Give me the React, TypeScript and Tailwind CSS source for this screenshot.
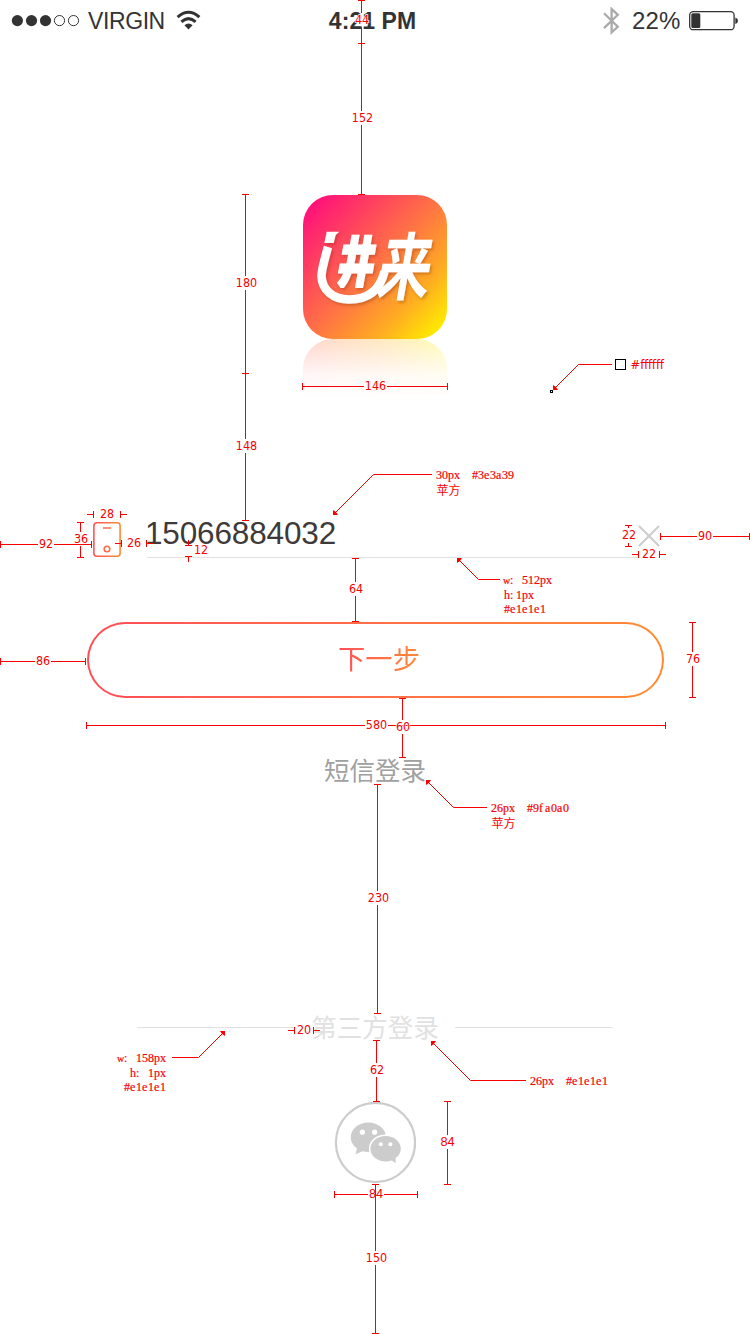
import React from "react";

const RED = "#f90000";

type Dim = {
  axis: "v" | "h";
  at: number;
  from: number;
  to: number;
  label: string;
  cx: number;
  cy: number;
  outside?: boolean;
  arial?: boolean;
};

const dims: Dim[] = [
  { axis: "v", at: 361, from: 0, to: 43, label: "44", cx: 362, cy: 20 },
  { axis: "v", at: 361, from: 43, to: 194, label: "152", cx: 362.5, cy: 118 },
  { axis: "v", at: 245, from: 194, to: 373, label: "180", cx: 246.5, cy: 283 },
  { axis: "v", at: 245, from: 373, to: 520, label: "148", cx: 246.5, cy: 446 },
  { axis: "v", at: 80, from: 522, to: 557, label: "36", cx: 81, cy: 539 },
  { axis: "v", at: 188, from: 545, to: 556, label: "12", cx: 201, cy: 550, outside: true },
  { axis: "v", at: 355, from: 558, to: 621, label: "64", cx: 356, cy: 589 },
  { axis: "v", at: 692, from: 622, to: 697, label: "76", cx: 693, cy: 659 },
  { axis: "v", at: 377, from: 784, to: 1013, label: "230", cx: 378.5, cy: 898 },
  { axis: "v", at: 376, from: 1040, to: 1101, label: "62", cx: 377, cy: 1070 },
  { axis: "v", at: 447, from: 1101, to: 1184, label: "84", cx: 447.5, cy: 1142, arial: true },
  { axis: "h", at: 386, from: 302, to: 447, label: "146", cx: 375.5, cy: 386 },
  { axis: "h", at: 514, from: 93, to: 120, label: "28", cx: 107, cy: 514, outside: true },
  { axis: "h", at: 544, from: 0, to: 91, label: "92", cx: 46, cy: 544 },
  { axis: "h", at: 543, from: 121, to: 146, label: "26", cx: 134, cy: 543, outside: true },
  { axis: "h", at: 554, from: 638, to: 659, label: "22", cx: 649, cy: 554, outside: true },
  { axis: "h", at: 536, from: 660, to: 749, label: "90", cx: 705, cy: 536 },
  { axis: "h", at: 661, from: 0, to: 85, label: "86", cx: 43, cy: 661 },
  { axis: "h", at: 725, from: 86, to: 665, label: "580", cx: 376.5, cy: 725 },
  { axis: "v", at: 402, from: 698, to: 757, label: "60", cx: 403, cy: 727 },
  { axis: "h", at: 1030, from: 294, to: 313, label: "20", cx: 304, cy: 1030, outside: true },
  { axis: "h", at: 1194, from: 334, to: 417, label: "84", cx: 376, cy: 1194, arial: true },
  { axis: "v", at: 375, from: 1184, to: 1333, label: "150", cx: 376.5, cy: 1258 },
];

function segments(d: Dim): [number, number][] {
  if (d.outside) {
    const reach = d.axis === "v" ? 5 : 6;
    return [
      [d.from - reach, d.from],
      [d.to, d.to + reach + 1],
    ];
  }
  const half = d.axis === "v" ? 7 : d.label.length * 3.5 + 1;
  const c = d.axis === "v" ? d.cy : d.cx;
  return [
    [d.from, c - half],
    [c + half, d.to + 1],
  ];
}

function Dimension({ d }: { d: Dim }) {
  const p = d.at + 0.5;
  const line = (a: number, b: number, k: number) =>
    d.axis === "v" ? (
      <line key={k} x1={p} x2={p} y1={a} y2={b} />
    ) : (
      <line key={k} x1={a} x2={b} y1={p} y2={p} />
    );
  const cap = (c: number, k: string) =>
    d.axis === "v" ? (
      <line key={k} x1={p - 3.5} x2={p + 3.5} y1={c + 0.5} y2={c + 0.5} />
    ) : (
      <line key={k} y1={p - 3.5} y2={p + 3.5} x1={c + 0.5} x2={c + 0.5} />
    );
  return (
    <g>
      <g stroke={RED} strokeWidth="1" shapeRendering="crispEdges">
        {segments(d).map(([a, b], i) => line(a, b, i))}
        {cap(d.from, "a")}
        {cap(d.to, "b")}
      </g>
      <Label x={d.cx} y={d.cy} arial={d.arial}>
        {d.label}
      </Label>
    </g>
  );
}

function Label({ x, y, arial, children }: { x: number; y: number; arial?: boolean; children: string }) {
  return (
    <text
      x={x}
      y={y + 4}
      textAnchor="middle"
      fill={RED}
      textLength={children.length * 7.1}
      lengthAdjust="spacingAndGlyphs"
      className={
        arial
          ? "font-['Liberation_Sans',sans-serif] text-[12.5px]"
          : "font-['DejaVu_Sans',sans-serif] text-[12px]"
      }
      stroke="#fff"
      strokeWidth="1.5"
      paintOrder="stroke"
    >
      {children}
    </text>
  );
}

/* Half-width note text set on a 6px grid, 12px for Han characters. */
function Note({ x, y, children }: { x: number; y: number; children: string }) {
  const han = children.charCodeAt(0) > 255;
  const wide = children.startsWith("w");
  const xs = Array.from(children)
    .map((_, i) => x + i * (han ? 12 : 6) - (wide && i === 0 ? 1 : 0))
    .join(" ");
  return (
    <text
      x={xs}
      y={y}
      fill={RED}
      xmlSpace="preserve"
      className="whitespace-pre font-['Liberation_Serif','Noto_Sans_CJK_SC',serif] text-[12px]"
      stroke={RED}
      strokeWidth={han ? 0 : 0.2}
    >
      {wide ? (
        <>
          <tspan className="text-[10px]">w</tspan>
          {children.slice(1)}
        </>
      ) : (
        children
      )}
    </text>
  );
}

function Leader({ points, tip, dx, dy }: { points: string; tip: [number, number]; dx: number; dy: number }) {
  const [x, y] = tip;
  return (
    <g>
      <polyline points={points} fill="none" stroke={RED} strokeWidth="1" />
      <polygon points={`${x},${y} ${x + 5 * dx},${y} ${x + 3 * dx},${y + 3 * dy} ${x},${y + 5 * dy}`} fill={RED} />
    </g>
  );
}

function Annotations() {
  return (
    <svg className="pointer-events-none absolute inset-0" width="750" height="1334" viewBox="0 0 750 1334">
      {dims.map((d, i) => (
        <Dimension key={i} d={d} />
      ))}
      <g stroke={RED} shapeRendering="crispEdges">
        <path d="M625 525.5h7M628.5 525v3M625 546.5h7M628.5 543v3" />
      </g>
      <Label x={629} y={535}>22</Label>

      <Leader points="612,364.5 578.5,364.5 554,389" tip={[553, 390]} dx={1} dy={-1} />
      <Leader points="432,474.5 373.5,474.5 334,514" tip={[333, 515]} dx={1} dy={-1} />
      <Leader points="500,579.5 478.5,579.5 458,559" tip={[457, 558]} dx={1} dy={1} />
      <Leader points="487,807.5 453.5,807.5 427,781" tip={[426, 780]} dx={1} dy={1} />
      <Leader points="172,1057.5 198.5,1057.5 224,1032" tip={[225, 1031]} dx={-1} dy={1} />
      <Leader points="526,1080.5 470.5,1080.5 432,1042" tip={[431, 1041]} dx={1} dy={1} />

      <rect x="615.5" y="359.5" width="10" height="10" fill="#fff" stroke="#000" />
      <rect x="550.5" y="390.5" width="2" height="2" fill="#fff" stroke="#000" />
      <text
        x="630.5"
        y="368.5"
        textLength="33.5"
        lengthAdjust="spacingAndGlyphs"
        fill={RED}
        className="font-['DejaVu_Sans',sans-serif] text-[12px]"
      >
        #ffffff
      </text>

      <Note x={436} y={479}>{"30px  #3e3a39"}</Note>
      <Note x={436.5} y={494.5}>苹方</Note>
      <Note x={504} y={584}>w: 512px</Note>
      <Note x={504} y={599}>h:1px</Note>
      <Note x={504} y={613}>#e1e1e1</Note>
      <Note x={491} y={812}>{"26px  #9fa0a0"}</Note>
      <Note x={491.5} y={827.5}>苹方</Note>
      <Note x={118} y={1062}>w: 158px</Note>
      <Note x={130} y={1077}>h: 1px</Note>
      <Note x={124} y={1091}>#e1e1e1</Note>
      <Note x={530} y={1085}>{"26px  #e1e1e1"}</Note>
    </svg>
  );
}

function StatusBar() {
  return (
    <header className="grid h-[41px] grid-cols-[250px_1fr_250px] items-center font-['Liberation_Sans',sans-serif] text-[23px] leading-none text-[#333]">
      <div className="flex items-center pl-[11px]">
        <svg width="70" height="14" viewBox="0 0 70 14">
          <g fill="#333">
            <circle cx="6.4" cy="6.6" r="5.6" />
            <circle cx="20.5" cy="6.6" r="5.6" />
            <circle cx="34.5" cy="6.6" r="5.6" />
          </g>
          <g fill="none" stroke="#333" strokeWidth="1">
            <circle cx="48.5" cy="6.6" r="5.1" />
            <circle cx="62.5" cy="6.6" r="5.1" />
          </g>
        </svg>
        <span className="ml-[7px] mt-[2px] w-[88px] tracking-[-0.4px]">VIRGIN</span>
        <svg width="25" height="20" viewBox="0 0 25 20" className="mt-[-1px]">
          <g fill="none" stroke="#333" strokeWidth="3">
            <path d="M1.6 7.2Q12.5 -2.6 23.4 7.2" />
            <path d="M5.4 11.8Q12.5 5.4 19.6 11.8" />
          </g>
          <path d="M8.4 15.2Q12.5 11.8 16.6 15.2L12.5 19.4Z" fill="#333" />
        </svg>
      </div>
      <div className="mt-[2px] pr-[5px] text-center font-bold tracking-[0.05px]">4:21 PM</div>
      <div className="flex items-center justify-end pr-[12px]">
        <svg width="17" height="28" viewBox="0 0 17 28" fill="none" stroke="#aaa" strokeWidth="2.3" className="mr-[1px]">
          <path d="M1 6.2L14.8 19.8L8.6 25.4V2L14.8 7.8L1 21.2" />
        </svg>
        <span className="ml-[11px] w-[57px] text-[24px] tracking-[0.2px]">22%</span>
        <svg width="49" height="20" viewBox="0 0 49 20">
          <rect x="0.7" y="0.7" width="44.4" height="18" rx="3.5" fill="none" stroke="#333" strokeWidth="1.3" />
          <rect x="2.3" y="2.3" width="9" height="14.8" rx="1.5" fill="#333" />
          <path d="M46.3 6.4Q49 7.2 49 9.7T46.3 13Z" fill="#333" />
        </svg>
      </div>
    </header>
  );
}

function LogoTile({ id, bare }: { id: string; bare?: boolean }) {
  return (
    <svg width="144" height="144" viewBox="0 0 144 144">
      <defs>
        <linearGradient id={id} x1="0.05" y1="0.08" x2="0.95" y2="0.92">
          <stop offset="0" stopColor="#ff1279" />
          <stop offset="0.5" stopColor="#ff7344" />
          <stop offset="0.78" stopColor="#ffac22" />
          <stop offset="1" stopColor="#ffe900" />
        </linearGradient>
        <filter id={`${id}-shadow`} x="-20%" y="-20%" width="140%" height="140%">
          <feDropShadow dx="1.5" dy="2" stdDeviation="1.5" floodColor="#8a3a00" floodOpacity="0.4" />
        </filter>
        <clipPath id={`${id}-inner`}>
          <path d="M20.5 -60H69V-5.6H20.5Z" />
        </clipPath>
      </defs>
      <rect width="144" height="144" rx="30" fill={`url(#${id})`} />
      {!bare && (
        <g filter={`url(#${id}-shadow)`} fill="#fff">
          <g className="font-['Noto_Sans_CJK_SC',sans-serif] text-[62px] font-black">
            <text transform="translate(12.5 99.5) skewX(-10) scale(0.9 1.18)" clipPath={`url(#${id}-inner)`}>
              进
            </text>
            <text transform="translate(71.5 98.5) skewX(-10) scale(0.86 1.18)" className="font-bold">
              来
            </text>
          </g>
          <path d="M23.7 36.7H36.3L32.7 40L30.7 48H21.3Z" />
          <path
            d="M25 52C20 70 18.5 75 18.5 81C19 95 30 104.5 46 104.5C65 104.5 77 95 81.5 76.5"
            fill="none"
            stroke="#fff"
            strokeWidth="8.6"
          />
        </g>
      )}
    </svg>
  );
}

function Logo() {
  return (
    <div className="flex flex-col items-center">
      <LogoTile id="tile" />
      <div className="h-[60px] overflow-hidden [mask-image:linear-gradient(to_bottom,rgba(0,0,0,0.28),rgba(0,0,0,0.05)_60%,transparent)]">
        <div className="scale-y-[-1]">
          <LogoTile id="tile-mirror" bare />
        </div>
      </div>
    </div>
  );
}

function PhoneIcon() {
  return (
    <svg width="28" height="35" viewBox="0 0 28 35" fill="none">
      <defs>
        <linearGradient id="phone" x1="0" x2="28" y1="0" y2="0" gradientUnits="userSpaceOnUse">
          <stop stopColor="#ff5257" />
          <stop offset="1" stopColor="#ff8a34" />
        </linearGradient>
      </defs>
      <g stroke="url(#phone)" strokeWidth="1.6">
        <rect x="0.9" y="0.8" width="26.2" height="33.4" rx="3" />
        <path d="M10 6L18 6.01" />
        <circle cx="14" cy="27" r="2.8" />
      </g>
    </svg>
  );
}

function WeChatIcon() {
  return (
    <svg width="82" height="82" viewBox="0 0 82 82">
      <circle cx="41.5" cy="40.5" r="39.6" fill="none" stroke="#ccc" strokeWidth="2.2" />
      <path d="M34.3 20.5C24.6 20.5 16.8 27 16.8 35.3C16.8 40 19.3 43.8 23 46.4L21.5 52.3L28.5 49.2C30.3 49.7 32.3 50 34.3 50C44 50 52 43.6 52 35.3C52 27 44 20.5 34.3 20.5Z" fill="#ccc" />
      <path
        d="M51.6 34.1C60 34.1 66.8 39.6 66.8 46.8C66.8 50.6 64.8 53.8 61.6 56.1L61.8 60.9L57.6 58.5C55.8 59.1 53.8 59.5 51.6 59.5C43.2 59.5 36.4 54 36.4 46.8C36.4 39.6 43.2 34.1 51.6 34.1Z"
        fill="#ccc"
        stroke="#fff"
        strokeWidth="3"
        paintOrder="stroke"
      />
      <g fill="#fff">
        <circle cx="28.4" cy="30.2" r="2.6" />
        <circle cx="40.7" cy="30.2" r="2.6" />
        <circle cx="46.8" cy="42.2" r="2" />
        <circle cx="56.4" cy="42.2" r="2" />
      </g>
    </svg>
  );
}

export default function App() {
  return (
    <div className="relative flex h-[1334px] w-[750px] flex-col overflow-hidden bg-white font-['Noto_Sans_CJK_SC',sans-serif]">
      <StatusBar />
      <main className="flex flex-col">
        <div className="mt-[154px]">
          <Logo />
        </div>

        <div className="mt-[117px] flex h-[42px] pl-[93px]">
          <div className="mt-[6px] w-[54px]">
            <PhoneIcon />
          </div>
          <div className="w-[491px] border-b border-[#e1e1e1]">
            <span className="block translate-x-[-2px] pt-[1px] font-['Liberation_Sans',sans-serif] text-[31.5px] leading-[32px] tracking-[-0.15px] text-[#3e3a39]">
              15066884032
            </span>
          </div>
          <svg width="22" height="22" viewBox="0 0 22 22" className="mt-[9px]" stroke="#ccc" strokeWidth="2">
            <path d="M1 1L21 21M21 1L1 21" />
          </svg>
        </div>

        <button className="ml-[87px] mt-[64px] h-[76px] w-[577px] rounded-full bg-linear-to-r from-[#ff4d57] to-[#ff8a32] p-[2px]">
          <span className="flex h-full items-center justify-center rounded-full bg-white pb-[7px] pl-[7px]">
            <span className="bg-linear-to-r from-[#ff4d57] to-[#ff8a32] bg-clip-text text-[27.3px] leading-[40px] text-transparent">
              下一步
            </span>
          </span>
        </button>

        <a className="mt-[49px] h-[44px] text-center text-[25.5px] leading-[44px] text-[#9fa0a0]">短信登录</a>

        <div className="mt-[214px] flex h-[44px] items-center justify-between pl-[137px] pr-[137px]">
          <div className="h-px w-[158px] bg-[#e1e1e1]" />
          <span className="pb-[2px] text-[25.5px] leading-[42px] text-[#e1e1e1]">第三方登录</span>
          <div className="h-px w-[158px] bg-[#e1e1e1]" />
        </div>

        <div className="mt-[53px] flex justify-center">
          <WeChatIcon />
        </div>
      </main>
      <Annotations />
    </div>
  );
}
